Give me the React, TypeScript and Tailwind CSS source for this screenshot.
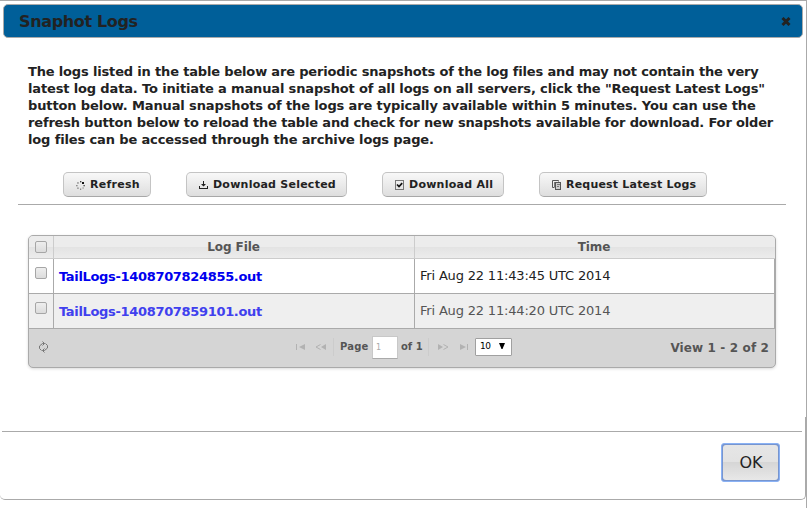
import React from "react";

const LINES: { text: string; cls: string }[] = [
  { text: "The logs listed in the table below are periodic snapshots of the log files and may not contain the very", cls: "tracking-[-0.165px]" },
  { text: "latest log data. To initiate a manual snapshot of all logs on all servers, click the \"Request Latest Logs\"", cls: "tracking-[-0.145px]" },
  { text: "button below. Manual snapshots of the logs are typically available within 5 minutes. You can use the", cls: "tracking-[-0.13px]" },
  { text: "refresh button below to reload the table and check for new snapshots available for download. For older", cls: "tracking-[-0.168px]" },
  { text: "log files can be accessed through the archive logs page.", cls: "tracking-[-0.135px]" },
];

function RefreshIcon() {
  return (
    <svg width="9" height="9" viewBox="0 0 9 9" className="shrink-0" fill="#444">
      <rect x="4" y="0" width="1.4" height="1.4" />
      <rect x="6" y="1" width="2" height="2" fill="#111" />
      <rect x="7.5" y="4" width="1.3" height="1.3" />
      <rect x="6.5" y="6.4" width="1.2" height="1.2" opacity=".6" />
      <rect x="4" y="7.6" width="1.2" height="1.2" opacity=".7" />
      <rect x="1.3" y="6.5" width="1.3" height="1.3" opacity=".7" />
      <rect x="0.2" y="4" width="1.3" height="1.3" opacity=".7" />
      <rect x="1.3" y="1.3" width="1.3" height="1.3" opacity=".8" />
    </svg>
  );
}

function DownloadIcon() {
  return (
    <svg width="9" height="8" viewBox="0 0 9 8" className="shrink-0" fill="#222">
      <path d="M4 0h1v3h2L4.500 5.500 2 3h2zM0 5h1v2h7V5h1v3H0z" />
    </svg>
  );
}

function CheckIcon() {
  return (
    <svg width="9" height="10" viewBox="0 0 9 10" className="shrink-0" fill="none">
      <rect x=".5" y=".5" width="8" height="9" stroke="#777" />
      <path d="M2 4.500l2 2 3.200-3.400" stroke="#111" strokeWidth="1.7" />
    </svg>
  );
}

function CopyIcon() {
  return (
    <svg width="9" height="10" viewBox="0 0 9 10" className="shrink-0" fill="none">
      <path d="M2.500 7.500h-2v-7h6v1" stroke="#555" />
      <rect x="3.500" y="2.500" width="5" height="7" stroke="#555" fill="#ccc" />
      <path d="M5 4.500h3M5 6.500h2M2.500 2v5" stroke="#777" />
    </svg>
  );
}

function ToolButton({ icon, label, width, track }: { icon: React.ReactNode; label: string; width: string; track: string }) {
  return (
    <button
      className={`flex h-[25px] items-center gap-[5px] rounded-[5px] border border-[#c4c4c4] border-b-[#a8a8a8] bg-linear-to-b from-[#f8f8f8] to-[#dedede] pt-px pl-3 text-[11px] font-bold whitespace-nowrap text-[#222] ${width} ${track}`}
    >
      {icon}
      <span>{label}</span>
    </button>
  );
}

function Checkbox() {
  return <span className="block size-3 rounded-[2px] border border-[#a6a6a6] bg-linear-to-b from-[#eee] to-[#dcdcdc]" />;
}

function Row({ name, time, faded }: { name: string; time: string; faded?: boolean }) {
  return (
    <div className={`flex h-[35px] border-b border-[#aaa] ${faded ? "bg-[#efefef]" : "bg-white"}`}>
      <div className="w-[25px] border-r border-[#aaa] pt-2 pl-[6px]">
        <Checkbox />
      </div>
      <div className={`w-[361px] border-r border-[#aaa] pt-[9px] pl-[5px] text-[13px] leading-[17px] font-bold tracking-[-0.33px] whitespace-nowrap ${faded ? "text-[#4040ee]" : "text-[#0000ee]"}`}>
        <span>{name}</span>
      </div>
      <div className={`flex-1 border-r border-[#aaa] pt-2 pl-[5px] text-[13px] leading-[17px] tracking-[-0.18px] whitespace-nowrap ${faded ? "text-[#555]" : "text-[#222]"}`}>
        <span>{time}</span>
      </div>
    </div>
  );
}

export default function App() {
  return (
    <div className="h-[508px] w-[807px] overflow-hidden border-t border-r border-[#aaa] bg-white font-['DejaVu_Sans',sans-serif] text-[#222]">
      <div className="flex w-[806px] flex-col pt-[3px]">
        <header className="ml-[3px] flex h-[34px] w-[800px] shrink-0 items-center justify-between rounded-[5px] border border-[#aaa] bg-[#005f99] pr-[11px] pl-[15px]">
          <h1 className="pt-px text-[16px] leading-5 font-bold tracking-[-0.35px] whitespace-nowrap"><span>Snaphot Logs</span></h1>
          <svg width="10" height="9" viewBox="0 0 10 9" className="mt-px">
            <path d="M1.500 1l7 7M8.500 1l-7 7" stroke="#222" strokeWidth="3" />
          </svg>
        </header>

        <p className="mt-[25px] ml-7 h-[85px] shrink-0 text-[13px] leading-[17px] font-bold whitespace-nowrap">
          {LINES.map((l) => (
            <span key={l.text} className={`block ${l.cls}`}>{l.text}</span>
          ))}
        </p>

        <div className="mt-[24px] ml-[18px] flex h-[33px] w-[768px] shrink-0 gap-[35px] border-b border-[#aaa] pl-[45px]">
          <ToolButton icon={<RefreshIcon />} label="Refresh" width="w-[88px]" track="tracking-[0.28px]" />
          <ToolButton icon={<DownloadIcon />} label="Download Selected" width="w-[161px]" track="tracking-[0.24px]" />
          <ToolButton icon={<CheckIcon />} label="Download All" width="w-[122px]" track="tracking-[0.25px]" />
          <ToolButton icon={<CopyIcon />} label="Request Latest Logs" width="w-[168px]" track="tracking-[0.2px]" />
        </div>

        <section className="mt-[30px] ml-7 flex h-[133px] w-[748px] shrink-0 flex-col overflow-hidden rounded-[5px] border border-[#aaa] bg-[#d5d5d5] shadow-[0_1px_3px_rgba(0,0,0,0.15)]">
          <div className="flex h-[23px] shrink-0 border-b border-[#ccc] bg-[linear-gradient(#ececec_0%,#ececec_50%,#e3e3e3_51%,#ececec_100%)] text-[12px] leading-[22px] font-bold text-[#555]">
            <div className="w-[25px] border-r border-[#ccc] pt-[5px] pl-[6px]"><Checkbox /></div>
            <div className="w-[361px] border-r border-[#ccc] pr-px text-center tracking-[-0.1px]"><span>Log File</span></div>
            <div className="flex-1 pr-[2px] text-center tracking-[-0.1px]"><span>Time</span></div>
          </div>
          <Row name="TailLogs-1408707824855.out" time="Fri Aug 22 11:43:45 UTC 2014" />
          <Row name="TailLogs-1408707859101.out" time="Fri Aug 22 11:44:20 UTC 2014" faded />
          <div className="flex h-[38px] items-center pb-[3px] text-[10px] font-bold text-[#555]">
            <svg width="11" height="12" viewBox="0 0 11 12" className="ml-[9px]" fill="none" stroke="#777">
              <path d="M3.500 9.500L1.500 7.500V5L4.500 2.500h2M4.500 .5l2 2-2 2M7.500 2.500l2 2V7l-3 2.500h-2M6.500 7.500l-2 2 2 2" />
            </svg>
            <svg width="32" height="8" viewBox="0 0 32 8" className="ml-[246px]" fill="#b2b2b2">
              <path d="M1 1h1v6H1zM10 1v6L4 4zM31 1v6l-5-3z" />
              <path d="M25.500 1.500L21 4l4.500 2.500" fill="none" stroke="#b2b2b2" />
            </svg>
            <span className="ml-[6px] h-[18px] w-px bg-[#ccc]" />
            <span className="ml-[6px] w-[28px] tracking-[0.2px] whitespace-nowrap">Page</span>
            <span className="ml-[4px] mt-[2px] flex h-[23px] w-[26px] items-center border border-[#c8c8c8] border-b-[#aaa] bg-white pl-[3px] text-[8px] font-normal text-[#aaa]">1</span>
            <span className="ml-[3px] w-[22px] whitespace-nowrap">of 1</span>
            <span className="ml-[5px] h-[18px] w-px bg-[#ccc]" />
            <svg width="32" height="8" viewBox="0 0 32 8" className="ml-[8px]" fill="#b2b2b2">
              <path d="M1 1v6l5-3zM23 1v6l6-3zM30 1h1v6h-1z" />
              <path d="M6.500 1.500L11 4 6.500 6.500" fill="none" stroke="#b2b2b2" />
            </svg>
            <span className="ml-[6px] flex h-[18px] w-[37px] items-center rounded-[1px] border border-[#a0a0a0] bg-white pl-1 text-[9px] font-normal text-black">
              <span className="w-[18px] tracking-[-0.5px]">10</span>
              <svg width="8" height="7" viewBox="0 0 8 7"><path d="M1 0h6L4.500 6h-1z" /></svg>
            </span>
            <span className="mt-[2px] mr-[6px] ml-auto text-[12px] tracking-[0.12px] whitespace-nowrap">View 1 - 2 of 2</span>
          </div>
        </section>

        <div className="mt-[49px] h-[83px] shrink-0 rounded-b-[5px] border-r border-b border-[#aaa] pt-[14px]">
          <footer className="ml-[2px] flex h-[68px] w-[800px] border-t border-[#aaa]">
            <button className="mt-[11px] ml-[719px] h-[39px] w-[59px] rounded-[3px] border border-[#8ab2f5] bg-[#7795cf] p-px">
              <span className="flex h-full items-center justify-center rounded-[3px] bg-[linear-gradient(#e6e6e6_0%,#e2e2e2_49%,#d6d6d6_50%,#e8e8e8_100%)] pl-px text-[16px]">OK</span>
            </button>
          </footer>
        </div>
      </div>
    </div>
  );
}
